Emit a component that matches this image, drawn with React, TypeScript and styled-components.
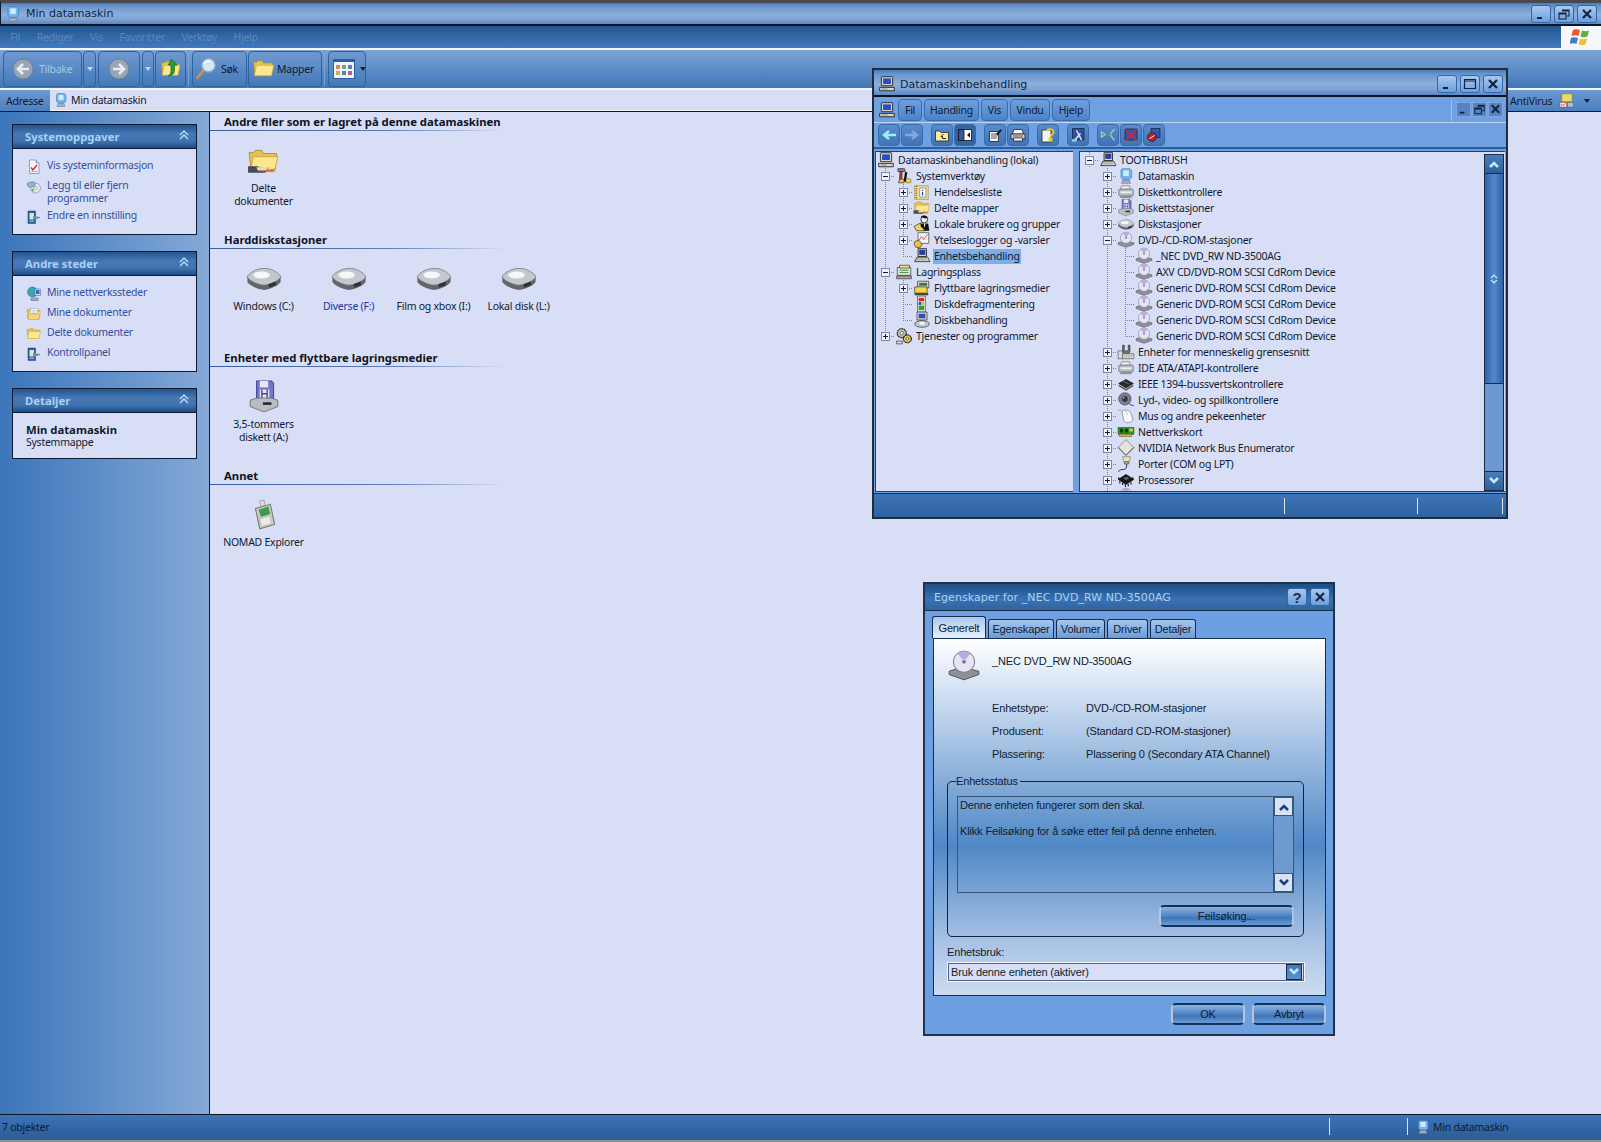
import React from 'react';
import styled, { createGlobalStyle, css } from 'styled-components';

const FONT = '"Noto Sans", "Liberation Sans", sans-serif';
const TITLE_FONT = '"DejaVu Sans", "Noto Sans", sans-serif';
const INK = '#101b30';

const GlobalStyle = createGlobalStyle`
  html, body { margin: 0; padding: 0; background: #d8def5; overflow: hidden; }
  body { font-family: ${FONT}; font-size: 10.5px; letter-spacing: -0.25px; color: ${INK}; }
  * { box-sizing: border-box; }
`;

const folder = (
  <>
    <path d="M2 7h4l2 -2h6l1 3h13l-2 17H4z" fill="#e8c24e" stroke="#a88a2c" strokeWidth=".8" />
    <path d="M6 11h23l-3 14H3z" fill="#fbe88e" stroke="#c8a23c" strokeWidth=".8" />
  </>
);
const hdd = (
  <>
    <path d="M2 15v4c0 2 8 7 14 7s14 -5 14 -7v-4z" fill="#62676e" />
    <path d="M2 15c0 -2 7 -7 13 -7h3c5 0 12 5 12 7s-8 7 -14 7S2 17 2 15z" fill="#c3c8ce" stroke="#6c7178" strokeWidth=".6" />
    <ellipse cx="14" cy="13.500" rx="7" ry="3" fill="#f6f7f9" />
    <path d="M20 21l6 -2v3l-6 2z" fill="#2f3338" />
  </>
);
const cd = (
  <>
    <path d="M2 21l12 -4 16 4v3l-14 5 -14 -5z" fill="#8d929a" stroke="#4a4f56" strokeWidth=".9" />
    <circle cx="16" cy="12" r="10" fill="#e4e4f2" stroke="#6e6e84" strokeWidth=".9" />
    <path d="M16 12L10 4a10 10 0 0 1 12 0z" fill="#b8aae2" />
    <circle cx="16" cy="12" r="2.200" fill="#7c7498" stroke="#fff" strokeWidth=".6" />
  </>
);
const monitor = (
  <>
    <rect x="6" y="3" width="20" height="16" rx="1" fill="#d9d6c8" stroke="#111" strokeWidth="1.400" />
    <rect x="9" y="6" width="14" height="10" fill="#2a4ec0" />
    <path d="M3 22h26v6H3z" fill="#d9d6c8" stroke="#111" strokeWidth="1.400" />
    <path d="M7 25h10" stroke="#555" />
  </>
);
const blueComputer = (
  <>
    <path d="M9 3h14l3 3v13l-4 3H11l-4 -3V6z" fill="#6fb6ee" stroke="#3670b0" />
    <path d="M11 6h10v10H11z" fill="#cfeaff" />
    <path d="M10 23h12l2 6H8z" fill="#a8acc0" stroke="#6a6e88" />
  </>
);
const drawer = (
  <>
    <path d="M8 5h14l2 6H6z" fill="#eef0f2" stroke="#555a62" />
    <rect x="3" y="11" width="26" height="12" rx="2" fill="#b8bcc2" stroke="#555a62" />
    <rect x="6" y="15" width="20" height="3" fill="#eceef0" />
    <path d="M6 23h20v4H6z" fill="#8d9198" />
  </>
);
const floppy = (
  <>
    <path d="M9 1h14l2 2v15H9z" fill="#7476c8" stroke="#44469a" />
    <path d="M12 1h8v6h-8z" fill="#e8e8f4" />
    <path d="M12 9h9v9h-9z" fill="#e8e8f4" />
    <path d="M14 9v9M19 9v9M14 13h5" stroke="#44469a" strokeWidth="1.300" />
    <path d="M3 19l6 -2h14l6 2v6l-13 5 -13 -5z" fill="#b9bcc2" stroke="#666a72" strokeWidth=".8" />
    <rect x="15" y="21" width="8" height="2.400" fill="#22252a" />
  </>
);
const chip = (
  <>
    <path d="M16 8l13 7 -13 8 -13 -8z" fill="#2c2c30" stroke="#000" />
    <path d="M3 17l13 8 13 -8v3l-13 8 -13 -8z" fill="#555" />
    <path d="M11 11l10 5" stroke="#999" />
  </>
);

const ICONS: Record<string, React.ReactNode> = {
  folder,
  hdd,
  cd,
  floppy,
  monitor,
  blueComputer,
  drawer,
  chip,
  shared: (
    <>
      {folder}
      <path d="M1 20h9l5 2 6 -1 -4 5H1z" fill="#4a4a52" />
      <path d="M9 21h6l6 -1 -3 4h-8z" fill="#f0d8b8" />
      <path d="M12 25l9 -2 6 -1 -3 3z" fill="#d86a2c" />
    </>
  ),
  docs: (
    <>
      {folder}
      <path d="M9 5h14v14H9z" fill="#fff" stroke="#8ba0bc" />
      <path d="M11 9h10M11 12h10M11 15h10" stroke="#7b93c0" />
      <path d="M4 16h24l-2 11H5z" fill="#f4d77a" stroke="#b8962e" />
    </>
  ),
  nomad: (
    <>
      <path d="M8 9l14 -4 4 19 -14 4z" fill="#c9ccc6" stroke="#74786e" />
      <path d="M11 10l9 -3 2 7 -9 3z" fill="#3d9a4c" />
      <path d="M13 19l8 -2 1 6 -8 2z" fill="#ecedea" />
      <path d="M12 2l4 -1 1 5 -4 1z" fill="#ddd" stroke="#888" strokeWidth=".6" />
    </>
  ),
  sysinfo: (
    <>
      <path d="M7 2h13l6 6v21H7z" fill="#f4f4fa" stroke="#4a5a82" />
      <path d="M20 2v6h6" fill="#d8dcec" stroke="#4a5a82" />
      <path d="M10 17l4 5 8 -10" fill="none" stroke="#d42030" strokeWidth="2.600" />
      <path d="M10 25h13" stroke="#c04060" />
    </>
  ),
  addRemove: (
    <>
      <circle cx="19" cy="18" r="10" fill="#dfe6ee" stroke="#68788a" />
      <circle cx="19" cy="18" r="3" fill="#fff" stroke="#68788a" />
      <path d="M3 8l10 -3 6 3 -2 7 -9 2 -5 -3z" fill="#8fb4c8" stroke="#507088" />
      <path d="M10 22l5 4v-7z" fill="#4aa84a" />
    </>
  ),
  control: (
    <>
      <path d="M4 4h15v25H4z" fill="#2f5f9f" stroke="#1e3a68" />
      <path d="M7 8h9v13H7z" fill="#d6e8c8" />
      <path d="M14 14l14 2v2l-14 4z" fill="#7a8aa8" />
      <path d="M7 23h9v3H7z" fill="#88a8d8" />
    </>
  ),
  network: (
    <>
      <circle cx="13" cy="12" r="10" fill="#3c9ed8" stroke="#20609a" />
      <path d="M6 8c4 -3 6 2 9 1s1 7 -3 7 -5 -4 -6 -8z" fill="#46b04a" />
      <path d="M18 6h11v13H18z" fill="#d8dcec" stroke="#4a5a82" />
      <path d="M20 8h7v8h-7z" fill="#2f6fd0" />
      <path d="M10 24h14v5H10z" fill="#a8acc4" stroke="#5a5e78" />
    </>
  ),
  up: (
    <>
      {folder}
      <path d="M17 2l8 8h-4v8c0 5 -4 8 -9 8 3 -2 4 -4 4 -8v-8h-4z" fill="#2aa42e" stroke="#0c5a14" />
    </>
  ),
  search: (
    <>
      <path d="M11 18L3 28" stroke="#c8944c" strokeWidth="3.400" strokeLinecap="round" />
      <circle cx="18" cy="11" r="9" fill="#cfe8f8" stroke="#8aa4bc" strokeWidth="1.800" />
      <path d="M12 9c2 -3 5 -4 8 -3" stroke="#fff" strokeWidth="2" fill="none" />
    </>
  ),
  tools: (
    <>
      <path d="M9 3l4 1 -1 20h-4z" fill="#c03a30" stroke="#111" />
      <path d="M5 3h12l1 5H5z" fill="#888" stroke="#111" />
      <path d="M18 8l4 2 -3 16h-4z" fill="#111" />
      <path d="M8 22l5 -1 3 2v5H6z" fill="#efc63c" stroke="#111" />
      <path d="M20 20l8 2v6h-8z" fill="#f0d860" stroke="#6a5a10" />
    </>
  ),
  eventlog: (
    <>
      <path d="M3 5h24v24H3z" fill="#f4e39a" stroke="#8a7424" />
      <path d="M6 5v24" stroke="#8a7424" strokeWidth="3" strokeDasharray="2 2" />
      <path d="M12 9h11v16H12z" fill="#fff" stroke="#555" />
      <path d="M17 12v2M17 16v6" stroke="#2040a0" strokeWidth="2.200" />
    </>
  ),
  users: (
    <>
      <circle cx="20" cy="8" r="6" fill="#f4f4f4" stroke="#111" strokeWidth="1.500" />
      <path d="M14 3c3 -3 10 -3 12 2l-5 1z" fill="#111" />
      <path d="M12 15h15l2 13H15z" fill="#111" />
      <path d="M19 15h3l-1 8z" fill="#fff" />
      <path d="M2 20l12 -6v6l8 8H6z" fill="#f2d35a" stroke="#111" />
    </>
  ),
  perf: (
    <>
      <path d="M9 3h19v19H9z" fill="#fff" stroke="#111" />
      <path d="M10 17l5 -7 4 5 7 -9" stroke="#c42828" fill="none" strokeWidth="1.400" />
      <path d="M13 3v19M18 3v19M23 3v19M9 9h19M9 15h19" stroke="#9aa" strokeWidth=".5" />
      <path d="M3 19l6 -3 4 3 3 5 -3 5H5l-3 -5z" fill="#e8c440" stroke="#111" />
    </>
  ),
  storage: (
    <>
      <path d="M4 8h24v14H4z" fill="#e6e4d8" stroke="#111" />
      <path d="M8 4h18v5H8z" fill="#f4e088" stroke="#111" />
      <path d="M8 13h16M8 17h16" stroke="#3a8a3a" strokeWidth="1.600" />
      <path d="M3 23h26v5H3z" fill="#aaa" stroke="#111" />
    </>
  ),
  removable: (
    <>
      <path d="M8 4h20v12H8z" fill="#d4d2c6" stroke="#111" />
      <path d="M11 7h14v5H11z" fill="#3a7a3a" />
      <path d="M3 14h22v11H3z" fill="#f0d848" stroke="#111" />
      <path d="M3 25h24v4H3z" fill="#444" />
    </>
  ),
  defrag: (
    <>
      <path d="M8 2h14v28H8z" fill="#f4f4f4" stroke="#222" />
      <path d="M10 5h10v6H10z" fill="#d02c2c" />
      <path d="M10 12h5v6h-5z" fill="#2c4cd0" />
      <path d="M15 12h5v6h-5z" fill="#e0c030" />
      <path d="M10 19h10v8H10z" fill="#2ca030" />
    </>
  ),
  diskmgmt: (
    <>
      <path d="M7 2h18v14H7z" fill="#d9d6c8" stroke="#111" />
      <path d="M10 5h12v8H10z" fill="#2a4ec0" />
      <ellipse cx="16" cy="23" rx="13" ry="6" fill="#c4c8ce" stroke="#111" />
      <ellipse cx="16" cy="22" rx="5" ry="2" fill="#fff" />
    </>
  ),
  services: (
    <>
      <circle cx="12" cy="11" r="8" fill="#c8c4b4" stroke="#111" strokeDasharray="3 1" strokeWidth="2" />
      <circle cx="12" cy="11" r="3" fill="#fff" stroke="#111" />
      <circle cx="22" cy="21" r="7" fill="#ecca4c" stroke="#111" strokeDasharray="3 1" strokeWidth="2" />
      <circle cx="22" cy="21" r="2.500" fill="#fff" stroke="#111" />
      <path d="M3 25h10v5H3z" fill="#ddd" stroke="#111" />
    </>
  ),
  laptop: (
    <>
      <path d="M9 3h15v14H9z" fill="#d9d6c8" stroke="#111" strokeWidth="1.400" />
      <path d="M11 5h11v9H11z" fill="#2a3e9c" />
      <path d="M7 18h19l4 8H3z" fill="#e8e6da" stroke="#111" strokeWidth="1.300" />
      <path d="M7 21h18M6 23h20" stroke="#333" strokeDasharray="1.500 1" />
    </>
  ),
  hid: (
    <>
      <path d="M2 14h8v14H2z" fill="#ddd" stroke="#333" />
      <path d="M10 4h3v8c0 3 7 3 7 0V4h3v10c0 4 -3 5 -6 5s-7 -1 -7 -5z" fill="#777" stroke="#111" />
      <path d="M10 19h20v9H10z" fill="#e6e6e0" stroke="#333" />
      <path d="M13 22h14M13 25h14" stroke="#555" strokeDasharray="2 1" />
    </>
  ),
  sound: (
    <>
      <circle cx="14" cy="14" r="11" fill="#7a8090" stroke="#333" />
      <circle cx="14" cy="14" r="5" fill="#30343c" />
      <circle cx="12" cy="12" r="1.500" fill="#ccc" />
      <path d="M22 22c2 3 5 4 8 4" stroke="#5a6ad8" strokeWidth="2" fill="none" />
    </>
  ),
  mouse: (
    <>
      <path d="M9 8c5 -5 14 -3 16 4l3 9c1 7 -14 10 -16 3z" fill="#fafafa" stroke="#70708a" strokeWidth="1.200" />
      <path d="M9 8c-3 -4 -6 -3 -7 -1" stroke="#70708a" fill="none" />
      <path d="M15 6l4 8" stroke="#9090a8" />
    </>
  ),
  netcard: (
    <>
      <path d="M2 8h28v12H2z" fill="#2f9a2f" stroke="#104a10" />
      <path d="M5 10h6v7H5zM14 10h6v7h-6z" fill="#0c3a0c" />
      <path d="M22 10h6v5h-6z" fill="#d6d23c" />
      <path d="M4 20h22v4H4z" fill="#d8b83c" stroke="#6a5a10" />
    </>
  ),
  nvidia: (
    <>
      <path d="M16 1l14 14 -14 14 -14 -14z" fill="#e4e4dc" stroke="#555" />
      <path d="M2 15l14 14 14 -14" fill="none" stroke="#777" strokeWidth="2" />
    </>
  ),
  port: (
    <>
      <path d="M10 3h14l-2 9h-10z" fill="#ece4a8" stroke="#666" />
      <path d="M13 12h8v4h-8z" fill="#aaa" stroke="#444" />
      <path d="M17 16v5c0 4 -4 5 -8 5s-6 2 -6 4" stroke="#222" strokeWidth="1.600" fill="none" />
    </>
  ),
  cpu: (
    <>
      <path d="M16 6l14 9 -14 9 -14 -9z" fill="#17171a" stroke="#000" />
      <path d="M5 18v4M10 21v4M15 24v4M20 23v4M25 20v4M3 11v4M28 11v4" stroke="#111" strokeWidth="2" />
      <path d="M11 13l6 -3 5 3 -6 3z" fill="#66666e" />
    </>
  ),
  antivirus: (
    <>
      <path d="M6 2h20v15H6z" fill="#f3d95c" stroke="#8c8a70" />
      <path d="M2 19h13v9H2z" fill="#f4f4f4" stroke="#b03030" />
      <path d="M4 23l4 2 5 -4" stroke="#c02a2a" fill="none" strokeWidth="1.600" />
      <path d="M17 19h12v9H17z" fill="#b8c0d0" stroke="#555" />
    </>
  ),
  upFolder: (
    <>
      <path d="M3 8h9l2 3h15v17H3z" fill="#f8ee9c" stroke="#111" strokeWidth="1.400" />
      <path d="M19 14l-5 5h3v4h7" fill="none" stroke="#111" strokeWidth="1.800" />
    </>
  ),
  splitPane: (
    <>
      <path d="M3 5h26v22H3z" fill="#fff" stroke="#111" strokeWidth="1.600" />
      <path d="M3 5h11v22H3z" fill="#345a90" stroke="#111" strokeWidth="1.600" />
      <path d="M26 11l-6 5 6 5z" fill="#111" />
    </>
  ),
  props: (
    <>
      <path d="M5 9h18v20H5z" fill="#f4f4f4" stroke="#111" strokeWidth="1.500" />
      <path d="M8 14h12M8 18h12M8 22h12" stroke="#111" strokeWidth="1.300" />
      <path d="M18 14l9 -10 3 3 -9 10z" fill="#222" />
    </>
  ),
  printer: (
    <>
      <path d="M8 5h16l3 9H5z" fill="#f8f8f8" stroke="#111" strokeWidth="1.400" />
      <path d="M2 14h28v10H2z" fill="#c8c8c8" stroke="#111" strokeWidth="1.400" />
      <path d="M7 22h18v6H7z" fill="#f8f8f8" stroke="#111" strokeWidth="1.400" />
      <path d="M6 18h20" stroke="#111" />
    </>
  ),
  helpDoc: (
    <>
      <path d="M4 6h18v24H4z" fill="#f4f4f4" stroke="#111" strokeWidth="1.400" />
      <path d="M13 9c2 -7 15 -6 14 2 -1 5 -6 4 -6 9M19 23h4v4h-4z" fill="none" stroke="#f0cc22" strokeWidth="3.600" />
    </>
  ),
  wrench: (
    <>
      <path d="M5 3h23v23H5z" fill="#2c4fa8" stroke="#111" strokeWidth="1.200" />
      <path d="M7 29l14 -16M13 7l10 19" stroke="#e8e8e8" strokeWidth="3" />
      <path d="M4 24h10v5H4z" fill="#88c8d8" />
    </>
  ),
  connect: (
    <>
      <path d="M3 10l8 5 -8 5zM29 4l-9 11 9 12" fill="none" stroke="#a8c8b8" strokeWidth="2.600" />
      <path d="M11 15h10" stroke="#5a9a5a" strokeWidth="3" />
    </>
  ),
  xMonitor: (
    <>
      <path d="M4 4h24v22H4z" fill="#3454b4" stroke="#111" strokeWidth="1.200" />
      <path d="M5 5l22 22M27 5L5 27" stroke="#d8262c" strokeWidth="3.400" />
    </>
  ),
  noMonitor: (
    <>
      <path d="M10 3h18v18H10z" fill="#3454b4" stroke="#111" strokeWidth="1.200" />
      <circle cx="12" cy="20" r="9" fill="#b0222c" stroke="#111" />
      <path d="M7 23l10 -6" stroke="#fff" strokeWidth="2" />
    </>
  ),
};

const Glyph = styled.svg<{ $size: number }>`
  flex: none;
  display: block;
  width: ${(p) => p.$size}px;
  height: ${(p) => p.$size}px;
`;

const Icon = ({ name, size = 16 }: { name: string; size?: number }) => (
  <Glyph $size={size} viewBox="0 0 32 32">
    {ICONS[name]}
  </Glyph>
);

/* main explorer window */

const Screen = styled.div`
  position: relative;
  display: flex;
  flex-direction: column;
  width: 1601px;
  height: 1142px;
  overflow: hidden;
  background: #d8def5;
`;

const titleGradient = css`
  background: linear-gradient(#4a7cb8 0%, #6c97cd 18%, #8cafdc 55%, #7fa3d3 78%, #5c87c0 100%);
`;

const TitleBar = styled.div`
  ${titleGradient};
  flex: none;
  display: flex;
  align-items: center;
  height: 26px;
  padding: 0 4px 0 3px;
  border-top: 3px solid #47494f;
  border-left: 1px solid #111a2b;
  border-bottom: 2px solid #0b1526;
`;

const WindowTitle = styled.span`
  flex: 1;
  margin-left: 4px;
  font-family: ${TITLE_FONT};
  font-size: 11px;
  letter-spacing: 0;
  color: #10233f;
`;

const CaptionButton = styled.span`
  flex: none;
  display: flex;
  align-items: center;
  justify-content: center;
  width: 20px;
  height: 18px;
  margin-left: 3px;
  border: 1px solid #2f66ac;
  border-radius: 3px;
  background: linear-gradient(#a8c8f0, #6e9fdc);
  color: #10243f;
`;

const CaptionSvg = styled.svg`
  display: block;
  width: 14px;
  height: 14px;
  fill: none;
  stroke: #10243f;
`;

const Minimize = () => (
  <CaptionSvg viewBox="0 0 14 14">
    <path d="M3 11h5" strokeWidth="2" />
  </CaptionSvg>
);
const Restore = () => (
  <CaptionSvg viewBox="0 0 14 14">
    <path d="M5 3h7v6h-2M2 6h7v6H2zM2 7h7M5 4h7" strokeWidth="1.100" />
  </CaptionSvg>
);
const Maximize = () => (
  <CaptionSvg viewBox="0 0 14 14">
    <path d="M1.500 2.500h11v9h-11zM1.500 4h11" strokeWidth="1.200" />
  </CaptionSvg>
);
const Close = () => (
  <CaptionSvg viewBox="0 0 14 14">
    <path d="M3 3l8 8M11 3l-8 8" strokeWidth="2.200" />
  </CaptionSvg>
);

const MenuBar = styled.div`
  flex: none;
  display: flex;
  align-items: center;
  justify-content: space-between;
  height: 24px;
  padding-left: 10px;
  background: linear-gradient(#24568f, #417ac0);
  border-bottom: 2px solid #f4f6fb;
`;

const MenuItems = styled.div`
  display: flex;
  gap: 16.500px;
`;

const MenuItem = styled.span`
  color: #5b87bb;
`;

const FlagBox = styled.div`
  display: flex;
  align-items: center;
  justify-content: center;
  width: 40px;
  height: 22px;
  background: #f6f7fa;
`;

const WinFlag = () => (
  <svg width="22" height="20" viewBox="0 0 22 20">
    <path d="M3 3c2 -1 4 -1 7 0l-1.500 6c-2 -1 -4 -1 -7 0z" fill="#e85a28" />
    <path d="M12 3.500c2 1 5 1 7 0l-1.500 6c-2 1 -5 1 -7 0z" fill="#5fb040" />
    <path d="M1 11c2 -1 4 -1 7 0l-1.500 6c-2 -1 -4 -1 -7 0z" fill="#3f7fd0" />
    <path d="M10 11.500c2 1 5 1 7 0l-1.500 6c-2 1 -5 1 -7 0z" fill="#f2c230" />
  </svg>
);

const Toolbar = styled.div`
  flex: none;
  display: flex;
  align-items: center;
  height: 40px;
  padding: 0 0 1px 3px;
  background: linear-gradient(#7ea5d6, #3f76b8);
  border-bottom: 2px solid #f4f6fb;
`;

const ToolButton = styled.div<{ $w: number; $gap?: number; $pad?: number; $inner?: number }>`
  flex: none;
  display: flex;
  align-items: center;
  gap: ${(p) => p.$inner ?? 5}px;
  width: ${(p) => p.$w}px;
  height: 36px;
  margin-right: ${(p) => p.$gap ?? 1}px;
  padding-left: ${(p) => p.$pad ?? 3}px;
  border: 1px solid #2e619f;
  border-radius: 4px;
  background: linear-gradient(#6f9ad0, #4479ba);
`;

const Caret = styled.span`
  width: 0;
  height: 0;
  margin: 0 auto;
  border: 3px solid transparent;
  border-top: 4px solid #0f1f38;
  border-bottom: 0;
`;

const GreyCaret = styled(Caret)`
  border-top-color: #c8d4e6;
`;

const ExtrasCaret = styled(Caret)`
  margin: 0;
`;

const BackDisc = styled.svg`
  flex: none;
  display: block;
  width: 22px;
  height: 22px;
`;

const Arrow = ({ flip }: { flip?: boolean }) => (
  <BackDisc viewBox="0 0 22 22">
    <circle cx="11" cy="11" r="10" fill="#9aa5b4" stroke="#6d7f98" />
    <path
      d={flip ? 'M5 11h10M11 6l5 5 -5 5' : 'M17 11H7M11 6l-5 5 5 5'}
      fill="none"
      stroke="#e8ecf2"
      strokeWidth="2.600"
    />
  </BackDisc>
);

const DimLabel = styled.span`
  color: #a9c6e6;
`;

const ViewsIcon = styled.div`
  display: grid;
  grid-template-columns: repeat(3, 4px);
  grid-auto-rows: 4px;
  gap: 2px;
  padding: 3px 2px;
  background: #eff3fb;
  border: 1px solid #2c5ea8;
  border-top-width: 3px;
`;

const ViewCell = styled.i<{ $c: string }>`
  background: ${(p) => p.$c};
`;

const ToolDivider = styled.span`
  width: 1px;
  height: 34px;
  margin: 0 3px 0 1px;
  background: #7ba3d4;
`;

const AddressBar = styled.div`
  flex: none;
  display: flex;
  align-items: stretch;
  height: 22px;
  background: linear-gradient(#6c99d0, #4b80c0);
  border-bottom: 1px solid #111b30;
`;

const AddressLabel = styled.span`
  display: flex;
  align-items: center;
  width: 50px;
  padding-left: 6px;
`;

const AddressField = styled.div`
  flex: 1;
  display: flex;
  align-items: center;
  gap: 2px;
  padding-left: 3px;
  background: #d8def5;
  border-bottom: 1px solid #f4f6fb;
`;

const AddressExtras = styled.div`
  flex: none;
  display: flex;
  align-items: center;
  width: 93px;
  padding-left: 2px;
`;

const ExtraIcon = styled.span`
  display: flex;
  margin-left: 7px;
  margin-right: 9px;
`;

const Body = styled.div`
  flex: 1;
  display: flex;
  min-height: 0;
`;

const Sidebar = styled.aside`
  flex: none;
  display: flex;
  flex-direction: column;
  gap: 16px;
  width: 210px;
  padding: 12px 12px 0;
  background: linear-gradient(90deg, #3b75ba, #85a9d8);
  border-right: 1px solid #111b30;
`;

const Panel = styled.section`
  width: 185px;
  background: #d8def5;
  border: 1px solid #0d1a33;
`;

const PanelHeader = styled.div`
  display: flex;
  align-items: center;
  justify-content: space-between;
  height: 24px;
  padding: 0 7px 0 12px;
  background: linear-gradient(#25548d, #4679b6 40%, #4073b0 70%, #1e4d86);
  border-bottom: 1px solid #0d1a33;
  font-size: 11.300px;
  font-weight: 700;
  letter-spacing: 0;
  color: #a8d0f4;
`;

const Chevrons = styled.svg`
  display: block;
  width: 10px;
  height: 10px;
  margin-top: -3px;
  fill: none;
  stroke: #b7dcf8;
  stroke-width: 1.400;
`;

const PanelBody = styled.div<{ $pad?: string }>`
  display: flex;
  flex-direction: column;
  gap: 4px;
  padding: ${(p) => p.$pad ?? '10px 8px 9px 13px'};
`;

const TaskLink = styled.div`
  display: flex;
  align-items: flex-start;
  gap: 5px;
  color: #31509e;
  line-height: 13px;
`;

const DetailName = styled.div`
  font-size: 11.300px;
  font-weight: 700;
  letter-spacing: 0;
  line-height: 13px;
`;

const DetailType = styled.div`
  line-height: 13px;
`;

const Content = styled.main`
  flex: 1;
  display: flex;
  flex-direction: column;
`;

const Section = styled.section`
  display: flex;
  flex-direction: column;
  height: 118px;
`;

const SectionTitle = styled.h2`
  flex: none;
  display: flex;
  align-items: center;
  width: 295px;
  height: 19px;
  margin: 0;
  padding-left: 14px;
  font-size: 11.300px;
  font-weight: 700;
  letter-spacing: 0;
  white-space: nowrap;
  color: #0c1424;
  border-bottom: 1px solid;
  border-image: linear-gradient(90deg, #3a5f9c 0%, #5b7cb6 60%, #d8def5 100%) 1;
`;

const Tiles = styled.div<{ $top: number }>`
  display: flex;
  padding: ${(p) => p.$top}px 0 0 11px;
`;

const Tile = styled.div<{ $blue?: boolean }>`
  display: flex;
  flex-direction: column;
  align-items: center;
  width: 85px;
  text-align: center;
  white-space: nowrap;
  line-height: 13px;
  color: ${(p) => (p.$blue ? '#22349c' : INK)};
`;

const TileIcon = styled.span<{ $space: number }>`
  display: flex;
  margin-bottom: ${(p) => p.$space}px;
`;

const StatusBar = styled.footer`
  flex: none;
  display: flex;
  align-items: center;
  height: 28px;
  padding: 0 0 2px 2px;
  background: linear-gradient(#3d74b7, #2f639f 70%, #2b5d97);
  border-top: 1px solid #0b1526;
  border-bottom: 2px solid #8a8f98;
`;

const StatusText = styled.span`
  flex: none;
  width: 1327px;
`;

const StatusDivider = styled.span<{ $before?: number; $after?: number }>`
  flex: none;
  width: 1px;
  height: 17px;
  margin-left: ${(p) => p.$before ?? 0}px;
  margin-right: ${(p) => p.$after ?? 0}px;
  background: #d9e6f6;
`;

const StatusName = styled.span`
  flex: none;
  display: flex;
  align-items: center;
  gap: 2px;
  width: 190px;
`;

/* computer management window */

const MmcWindow = styled.div`
  position: absolute;
  left: 872px;
  top: 68px;
  display: flex;
  flex-direction: column;
  width: 636px;
  height: 451px;
  background: #6ea0e2;
  border: 2px solid #232c3c;
`;

const MmcTitle = styled.div`
  ${titleGradient};
  flex: none;
  display: flex;
  align-items: center;
  height: 27px;
  padding: 3px 3px 0 4px;
  border-bottom: 2px solid #0b1526;
`;

const MmcMenu = styled.div`
  flex: none;
  display: flex;
  align-items: center;
  height: 26px;
  padding: 3px 3px 2px 4px;
  border-bottom: 1px solid #bcd4f0;
`;

const MmcMenuButton = styled.span<{ $w: number }>`
  display: flex;
  align-items: center;
  justify-content: center;
  width: ${(p) => p.$w}px;
  height: 22px;
  margin-left: 2px;
  border: 1px solid #376cb0;
  border-radius: 4px;
  background: linear-gradient(#70a0dc, #4d82c6);
`;

const MmcDocButtons = styled.div`
  display: flex;
  margin-left: auto;
  padding-left: 4px;
  gap: 1px;
  height: 21px;
  border-left: 1px solid #a5c2ea;
`;

const MmcDocButton = styled.span`
  display: flex;
  align-items: center;
  justify-content: center;
  width: 15px;
  height: 15px;
  margin-top: 2px;
  background: #5484c6;
  border: 1px solid #80a4d8;
`;

const MmcTools = styled.div`
  flex: none;
  display: flex;
  align-items: center;
  height: 26px;
  padding-left: 4px;
  border-bottom: 2px solid #2f5d98;
`;

const MmcTool = styled.span<{ $gap?: number; $dark?: boolean }>`
  flex: none;
  display: flex;
  align-items: center;
  justify-content: center;
  width: 22px;
  height: 22px;
  margin-right: ${(p) => p.$gap ?? 1}px;
  border: 1px solid #376cb0;
  border-radius: 4px;
  background: ${(p) => (p.$dark ? '#34639f' : 'linear-gradient(#5a8ccc, #3f74b6)')};
`;

const ToolArrow = styled.svg`
  display: block;
  width: 16px;
  height: 12px;
`;

const Panes = styled.div`
  flex: 1;
  display: flex;
  gap: 6px;
  min-height: 0;
  padding: 2px 1px 0 1px;
`;

const Pane = styled.div<{ $w: number }>`
  flex: ${(p) => (p.$w ? 'none' : '1')};
  ${(p) => (p.$w ? `width: ${p.$w}px;` : '')}
  display: flex;
  min-width: 0;
  overflow: hidden;
  background: #d8def5;
  border-left: 1px solid #24406c;
  border-top: 1px solid #24406c;
  border-bottom: 1px solid #24406c;
`;

const Tree = styled.div`
  flex: 1;
  display: flex;
  flex-direction: column;
  min-width: 0;
`;

const TreeRow = styled.div`
  flex: none;
  display: flex;
  align-items: center;
  height: 16px;
  white-space: nowrap;
`;

const dots = 'repeating-linear-gradient(#76849c 0 1px, transparent 1px 2px)';
const dotsH = 'repeating-linear-gradient(90deg, #76849c 0 1px, transparent 1px 2px)';

const GuideCell = styled.span<{ $kind: string }>`
  flex: none;
  display: flex;
  align-items: center;
  justify-content: center;
  width: 18px;
  height: 16px;
  background-repeat: no-repeat;
  ${({ $kind }) => {
    if ($kind === '|') return `background-image: ${dots}; background-size: 1px 16px; background-position: 9px 0;`;
    if ($kind === 't' || $kind === '+' || $kind === '-')
      return `background-image: ${dots}, ${dotsH}; background-size: 1px 16px, 9px 1px; background-position: 9px 0, 9px 8px;`;
    if ($kind === 'l' || $kind === 'p')
      return `background-image: ${dots}, ${dotsH}; background-size: 1px 8px, 9px 1px; background-position: 9px 0, 9px 8px;`;
    return '';
  }}
`;

const Expander = styled.span<{ $open: boolean }>`
  display: block;
  width: 9px;
  height: 9px;
  margin-left: 1px;
  border: 1px solid #7b88a0;
  background-color: #eef0fa;
  background-image: linear-gradient(#101b30, #101b30)
    ${(p) => (p.$open ? '' : ', linear-gradient(#101b30, #101b30)')};
  background-repeat: no-repeat;
  background-size: 5px 1px ${(p) => (p.$open ? '' : ', 1px 5px')};
  background-position: center ${(p) => (p.$open ? '' : ', center')};
`;

const RowIcon = styled.span`
  flex: none;
  display: flex;
  margin-left: 1px;
`;

const RowLabel = styled.span<{ $sel?: boolean }>`
  margin-left: 2px;
  padding: 0 1px;
  line-height: 15px;
  ${(p) => (p.$sel ? 'background: #7daeea;' : '')}
`;

type Row = [string, string, string, boolean?];

const LEFT_ROWS: Row[] = [
  ['', 'monitor', 'Datamaskinbehandling (lokal)'],
  ['-', 'tools', 'Systemverktøy'],
  ['|+', 'eventlog', 'Hendelsesliste'],
  ['|+', 'shared', 'Delte mapper'],
  ['|+', 'users', 'Lokale brukere og grupper'],
  ['|+', 'perf', 'Ytelseslogger og -varsler'],
  ['|l', 'laptop', 'Enhetsbehandling', true],
  ['-', 'storage', 'Lagringsplass'],
  ['|+', 'removable', 'Flyttbare lagringsmedier'],
  ['|t', 'defrag', 'Diskdefragmentering'],
  ['|l', 'diskmgmt', 'Diskbehandling'],
  ['p', 'services', 'Tjenester og programmer'],
];

const RIGHT_ROWS: Row[] = [
  ['-', 'laptop', 'TOOTHBRUSH'],
  [' +', 'blueComputer', 'Datamaskin'],
  [' +', 'drawer', 'Diskettkontrollere'],
  [' +', 'floppy', 'Diskettstasjoner'],
  [' +', 'hdd', 'Diskstasjoner'],
  [' -', 'cd', 'DVD-/CD-ROM-stasjoner'],
  [' |t', 'cd', '_NEC DVD_RW ND-3500AG'],
  [' |t', 'cd', 'AXV CD/DVD-ROM SCSI CdRom Device'],
  [' |t', 'cd', 'Generic DVD-ROM SCSI CdRom Device'],
  [' |t', 'cd', 'Generic DVD-ROM SCSI CdRom Device'],
  [' |t', 'cd', 'Generic DVD-ROM SCSI CdRom Device'],
  [' |l', 'cd', 'Generic DVD-ROM SCSI CdRom Device'],
  [' +', 'hid', 'Enheter for menneskelig grensesnitt'],
  [' +', 'drawer', 'IDE ATA/ATAPI-kontrollere'],
  [' +', 'chip', 'IEEE 1394-bussvertskontrollere'],
  [' +', 'sound', 'Lyd-, video- og spillkontrollere'],
  [' +', 'mouse', 'Mus og andre pekeenheter'],
  [' +', 'netcard', 'Nettverkskort'],
  [' +', 'nvidia', 'NVIDIA Network Bus Enumerator'],
  [' +', 'port', 'Porter (COM og LPT)'],
  [' +', 'cpu', 'Prosessorer'],
  [' t', 'cd', ''],
];

const TreeList = ({ rows }: { rows: Row[] }) => (
  <Tree>
    {rows.map(([guides, icon, label, selected], i) => (
      <TreeRow key={i}>
        {guides.split('').map((g, j) => (
          <GuideCell key={j} $kind={g}>
            {(g === '+' || g === '-' || g === 'p') && <Expander $open={g === '-'} />}
          </GuideCell>
        ))}
        <RowIcon>
          <Icon name={icon} size={18} />
        </RowIcon>
        <RowLabel $sel={selected}>{label}</RowLabel>
      </TreeRow>
    ))}
  </Tree>
);

const ScrollBar = styled.div`
  flex: none;
  display: flex;
  flex-direction: column;
  width: 20px;
  margin: 2px 1px 0 0;
  background: #6e99d0;
  border-left: 1px solid #1b2c4a;
  border-right: 1px solid #1b2c4a;
`;

const ScrollButton = styled.span`
  flex: none;
  display: flex;
  align-items: center;
  justify-content: center;
  height: 20px;
  margin: 0 -1px;
  background: linear-gradient(#4a7cba, #2f6098);
  border: 1px solid #1b2c4a;
`;

const ScrollThumb = styled.span`
  flex: none;
  display: flex;
  align-items: center;
  justify-content: center;
  height: 210px;
  background: linear-gradient(90deg, #2e63a3, #5289cc 50%, #2e63a3);
  border-bottom: 1px solid #1b2c4a;
`;

const ScrollSpace = styled.span`
  flex: 1;
`;

const Grip = styled.svg`
  display: block;
  width: 8px;
  height: 10px;
  fill: none;
  stroke: #cfe8fb;
  stroke-width: 1.200;
`;

const Chevron = styled.svg<{ $dark?: boolean }>`
  display: block;
  width: 12px;
  height: 8px;
  fill: none;
  stroke: ${(p) => (p.$dark ? '#1c4070' : '#bfeafc')};
  stroke-width: 2.500;
`;

const ChevUp = ({ dark }: { dark?: boolean }) => (
  <Chevron viewBox="0 0 12 8" $dark={dark}>
    <path d="M2 7l4 -4 4 4" />
  </Chevron>
);
const ChevDown = ({ dark }: { dark?: boolean }) => (
  <Chevron viewBox="0 0 12 8" $dark={dark}>
    <path d="M2 1l4 4 4 -4" />
  </Chevron>
);

const MmcStatus = styled.div`
  flex: none;
  display: flex;
  justify-content: flex-end;
  align-items: center;
  height: 24px;
  margin-top: 1px;
  padding-right: 3px;
  background: linear-gradient(#3d74b7, #2f639f);
  border-top: 1px solid #1b2c4a;
`;

const MmcStatusCell = styled.span<{ $w: number }>`
  width: ${(p) => p.$w}px;
  height: 16px;
  border-right: 1px solid #d9e6f6;
`;

/* properties dialog */

const Dialog = styled.div`
  position: absolute;
  left: 923px;
  top: 582px;
  display: flex;
  flex-direction: column;
  width: 412px;
  height: 454px;
  background: #6ca0e2;
  border: 2px solid #1e3350;
  font-family: "Liberation Sans", sans-serif;
  font-size: 11px;
  letter-spacing: -0.15px;
`;

const DialogTitle = styled.div`
  flex: none;
  display: flex;
  align-items: center;
  height: 27px;
  padding: 0 3px 0 9px;
  background: linear-gradient(#1c4e84, #3b72b2 60%, #2e639f);
  border-bottom: 1px solid #1b2c4a;
  font-family: ${TITLE_FONT};
  font-size: 11px;
  letter-spacing: 0.07px;
  color: #a9d2f6;
`;

const DialogTitleText = styled.span`
  flex: 1;
`;

const HelpMark = styled.span`
  font: 700 15px/1 "Liberation Sans", sans-serif;
  color: #1b2e4c;
`;

const Tabs = styled.div`
  flex: none;
  display: flex;
  align-items: flex-end;
  height: 27px;
  padding-left: 7px;
`;

const Tab = styled.span<{ $w: number; $active?: boolean }>`
  display: flex;
  align-items: center;
  justify-content: center;
  width: ${(p) => p.$w}px;
  height: ${(p) => (p.$active ? 22 : 19)}px;
  margin-right: 2px;
  border: 1px solid #1b2c4a;
  border-bottom: 0;
  border-radius: 3px 3px 0 0;
  background: ${(p) => (p.$active ? 'linear-gradient(#a8c8ee, #e8f0fb)' : 'linear-gradient(#a9c6ec, #6a9cd9)')};
`;

const TabPanel = styled.div`
  flex: none;
  display: flex;
  flex-direction: column;
  width: 393px;
  height: 358px;
  margin-left: 8px;
  padding: 10px 20px 0 13px;
  background: linear-gradient(#ffffff 0%, #c8daf0 18%, #4f88c6 58%, #a8c2e4 85%, #ccdcf0 100%);
  border: 1px solid #1b2c4a;
`;

const DeviceHead = styled.div`
  display: flex;
  gap: 11px;
  height: 44px;
`;

const DeviceName = styled.span`
  padding-top: 6px;
`;

const InfoGrid = styled.div`
  display: grid;
  grid-template-columns: 94px 1fr;
  grid-auto-rows: 23px;
  align-items: center;
  padding-left: 45px;
  margin-top: 3px;
`;

const GroupBox = styled.fieldset`
  display: flex;
  flex-direction: column;
  width: 357px;
  height: 162px;
  min-width: 0;
  margin: 10px 0 0;
  padding: 0 9px;
  border: 1px solid #10243f;
  border-radius: 5px;
`;

const GroupLegend = styled.legend`
  margin-left: -1px;
  padding: 0 2px 0 0;
  line-height: 12px;
`;

const StatusBox = styled.div`
  flex: none;
  display: flex;
  width: 337px;
  height: 97px;
  margin-top: 9px;
  border: 1px solid #3b5778;
`;

const StatusBoxText = styled.div`
  flex: 1;
  padding: 1px 2px;
  line-height: 14px;
`;

const StatusLine = styled.p`
  margin: 0 0 12px;
`;

const BoxScroll = styled.div`
  flex: none;
  display: flex;
  flex-direction: column;
  justify-content: space-between;
  width: 20px;
  background: #6f9ad0;
  border-left: 1px solid #3b5778;
`;

const BoxScrollButton = styled.span`
  display: flex;
  align-items: center;
  justify-content: center;
  height: 19px;
  background: #d8e2f5;
  border: 1px solid #3b5778;
`;

const GlassButton = styled.span<{ $w: number }>`
  flex: none;
  display: flex;
  align-items: center;
  justify-content: center;
  width: ${(p) => p.$w}px;
  height: 22px;
  border-style: solid;
  border-width: 2px;
  border-color: #12325c #b4c6dc #12325c #b4c6dc;
  border-radius: 5px;
  background: linear-gradient(#8db2e0, #4d84c6 50%, #3f76b8 60%, #6b9bd6);
`;

const TroubleRow = styled.div`
  display: flex;
  justify-content: flex-end;
  margin-top: 12px;
`;

const UsageLabel = styled.div`
  margin-top: 8px;
  line-height: 14px;
`;

const UsageSelect = styled.div`
  display: flex;
  align-items: center;
  justify-content: space-between;
  width: 358px;
  height: 20px;
  margin-top: 3px;
  padding: 0 1px 0 3px;
  background: #d8def5;
  border: 1px solid #f2f5fb;
  outline: 1px solid #52677f;
  outline-offset: -2px;
`;

const SelectArrow = styled.span`
  display: flex;
  align-items: center;
  justify-content: center;
  width: 16px;
  height: 16px;
  margin-right: 1px;
  background: linear-gradient(#4378b8, #5a90d0);
  border: 1px solid #14294a;
`;

const DialogActions = styled.div`
  display: flex;
  justify-content: flex-end;
  gap: 7px;
  padding: 7px 7px 0 0;
`;

const Chevs = () => (
  <Chevrons viewBox="0 0 10 10">
    <path d="M1 5l4 -4 4 4M1 9l4 -4 4 4" />
  </Chevrons>
);

const PANEL_ONE = [
  ['sysinfo', 'Vis systeminformasjon'],
  ['addRemove', 'Legg til eller fjern programmer'],
  ['control', 'Endre en innstilling'],
];
const PANEL_TWO = [
  ['network', 'Mine nettverkssteder'],
  ['docs', 'Mine dokumenter'],
  ['folder', 'Delte dokumenter'],
  ['control', 'Kontrollpanel'],
];

const DRIVES = [
  { label: 'Windows (C:)' },
  { label: 'Diverse (F:)', blue: true },
  { label: 'Film og xbox (I:)' },
  { label: 'Lokal disk (L:)' },
];

const VIEW_COLORS = ['#d88a5a', '#7aa86a', '#6a78c0', '#c8b050', '#5a8a9a', '#a86a88'];
const MENU = ['Fil', 'Rediger', 'Vis', 'Favoritter', 'Verktøy', 'Hjelp'];
const MMC_MENU: [string, number][] = [
  ['Fil', 24],
  ['Handling', 55],
  ['Vis', 27],
  ['Vindu', 40],
  ['Hjelp', 38],
];
const TABS: [string, number, boolean?][] = [
  ['Generelt', 54, true],
  ['Egenskaper', 66],
  ['Volumer', 49],
  ['Driver', 41],
  ['Detaljer', 46],
];

const MmcToolbar = () => (
  <MmcTools>
    <MmcTool>
      <ToolArrow viewBox="0 0 16 12">
        <path d="M15 6H5M8 2L3 6l5 4" fill="none" stroke="#9ff0f0" strokeWidth="2.400" />
      </ToolArrow>
    </MmcTool>
    <MmcTool $gap={8}>
      <ToolArrow viewBox="0 0 16 12">
        <path d="M1 6h10M8 2l5 4 -5 4" fill="none" stroke="#86a8d8" strokeWidth="2.400" />
      </ToolArrow>
    </MmcTool>
    <MmcTool>
      <Icon name="upFolder" />
    </MmcTool>
    <MmcTool $gap={8} $dark>
      <Icon name="splitPane" />
    </MmcTool>
    <MmcTool>
      <Icon name="props" />
    </MmcTool>
    <MmcTool $gap={8}>
      <Icon name="printer" />
    </MmcTool>
    <MmcTool $gap={8}>
      <Icon name="helpDoc" />
    </MmcTool>
    <MmcTool $gap={8}>
      <Icon name="wrench" />
    </MmcTool>
    <MmcTool>
      <Icon name="connect" />
    </MmcTool>
    <MmcTool>
      <Icon name="xMonitor" />
    </MmcTool>
    <MmcTool>
      <Icon name="noMonitor" />
    </MmcTool>
  </MmcTools>
);

const App = () => (
  <Screen>
    <GlobalStyle />
    <TitleBar>
      <Icon name="blueComputer" size={18} />
      <WindowTitle>Min datamaskin</WindowTitle>
      <CaptionButton>
        <Minimize />
      </CaptionButton>
      <CaptionButton>
        <Restore />
      </CaptionButton>
      <CaptionButton>
        <Close />
      </CaptionButton>
    </TitleBar>
    <MenuBar>
      <MenuItems>
        {MENU.map((m) => (
          <MenuItem key={m}>{m}</MenuItem>
        ))}
      </MenuItems>
      <FlagBox>
        <WinFlag />
      </FlagBox>
    </MenuBar>
    <Toolbar>
      <ToolButton $w={79} $pad={8}>
        <Arrow />
        <DimLabel>Tilbake</DimLabel>
      </ToolButton>
      <ToolButton $w={13} $gap={2} $pad={0}>
        <GreyCaret />
      </ToolButton>
      <ToolButton $w={42} $gap={2} $pad={9}>
        <Arrow flip />
      </ToolButton>
      <ToolButton $w={12} $gap={1} $pad={0}>
        <GreyCaret />
      </ToolButton>
      <ToolButton $w={31} $pad={4}>
        <Icon name="up" size={22} />
      </ToolButton>
      <ToolDivider />
      <ToolButton $w={55} $gap={1} $pad={2} $inner={2}>
        <Icon name="search" size={24} />
        <span>Søk</span>
      </ToolButton>
      <ToolButton $w={74} $inner={1}>
        <Icon name="folder" size={24} />
        <span>Mapper</span>
      </ToolButton>
      <ToolDivider />
      <ToolButton $w={38} $pad={4}>
        <ViewsIcon>
          {VIEW_COLORS.map((c) => (
            <ViewCell key={c} $c={c} />
          ))}
        </ViewsIcon>
        <Caret />
      </ToolButton>
    </Toolbar>
    <AddressBar>
      <AddressLabel>Adresse</AddressLabel>
      <AddressField>
        <Icon name="blueComputer" />
        <span>Min datamaskin</span>
      </AddressField>
      <AddressExtras>
        AntiVirus
        <ExtraIcon>
          <Icon name="antivirus" />
        </ExtraIcon>
        <ExtrasCaret />
      </AddressExtras>
    </AddressBar>
    <Body>
      <Sidebar>
        <Panel>
          <PanelHeader>
            Systemoppgaver
            <Chevs />
          </PanelHeader>
          <PanelBody>
            {PANEL_ONE.map(([icon, label]) => (
              <TaskLink key={label}>
                <Icon name={icon} />
                <span>{label}</span>
              </TaskLink>
            ))}
          </PanelBody>
        </Panel>
        <Panel>
          <PanelHeader>
            Andre steder
            <Chevs />
          </PanelHeader>
          <PanelBody>
            {PANEL_TWO.map(([icon, label]) => (
              <TaskLink key={label}>
                <Icon name={icon} />
                <span>{label}</span>
              </TaskLink>
            ))}
          </PanelBody>
        </Panel>
        <Panel>
          <PanelHeader>
            Detaljer
            <Chevs />
          </PanelHeader>
          <PanelBody $pad="10px 8px 9px 13px">
            <div>
              <DetailName>Min datamaskin</DetailName>
              <DetailType>Systemmappe</DetailType>
            </div>
          </PanelBody>
        </Panel>
      </Sidebar>
      <Content>
        <Section>
          <SectionTitle>Andre filer som er lagret på denne datamaskinen</SectionTitle>
          <Tiles $top={14}>
            <Tile>
              <TileIcon $space={3}>
                <Icon name="shared" size={34} />
              </TileIcon>
              Delte
              <br />
              dokumenter
            </Tile>
          </Tiles>
        </Section>
        <Section>
          <SectionTitle>Harddiskstasjoner</SectionTitle>
          <Tiles $top={10}>
            {DRIVES.map((d) => (
              <Tile key={d.label} $blue={d.blue}>
                <TileIcon $space={3}>
                  <Icon name="hdd" size={38} />
                </TileIcon>
                {d.label}
              </Tile>
            ))}
          </Tiles>
        </Section>
        <Section>
          <SectionTitle>Enheter med flyttbare lagringsmedier</SectionTitle>
          <Tiles $top={13}>
            <Tile>
              <TileIcon $space={4}>
                <Icon name="floppy" size={34} />
              </TileIcon>
              3,5-tommers
              <br />
              diskett (A:)
            </Tile>
          </Tiles>
        </Section>
        <Section>
          <SectionTitle>Annet</SectionTitle>
          <Tiles $top={14}>
            <Tile>
              <TileIcon $space={3}>
                <Icon name="nomad" size={34} />
              </TileIcon>
              NOMAD Explorer
            </Tile>
          </Tiles>
        </Section>
      </Content>
    </Body>
    <StatusBar>
      <StatusText>7 objekter</StatusText>
      <StatusDivider />
      <StatusDivider $before={77} $after={7} />
      <StatusName>
        <Icon name="blueComputer" />
        Min datamaskin
      </StatusName>
      <StatusDivider />
    </StatusBar>

    <MmcWindow>
      <MmcTitle>
        <Icon name="monitor" size={18} />
        <WindowTitle>Datamaskinbehandling</WindowTitle>
        <CaptionButton>
          <Minimize />
        </CaptionButton>
        <CaptionButton>
          <Maximize />
        </CaptionButton>
        <CaptionButton>
          <Close />
        </CaptionButton>
      </MmcTitle>
      <MmcMenu>
        <Icon name="monitor" size={18} />
        {MMC_MENU.map(([label, w]) => (
          <MmcMenuButton key={label} $w={w}>
            {label}
          </MmcMenuButton>
        ))}
        <MmcDocButtons>
          <MmcDocButton>
            <Minimize />
          </MmcDocButton>
          <MmcDocButton>
            <Restore />
          </MmcDocButton>
          <MmcDocButton>
            <Close />
          </MmcDocButton>
        </MmcDocButtons>
      </MmcMenu>
      <MmcToolbar />
      <Panes>
        <Pane $w={198}>
          <TreeList rows={LEFT_ROWS} />
        </Pane>
        <Pane $w={0}>
          <TreeList rows={RIGHT_ROWS} />
          <ScrollBar>
            <ScrollButton>
              <ChevUp />
            </ScrollButton>
            <ScrollThumb>
              <Grip viewBox="0 0 8 10">
                <path d="M1 4l3 -3 3 3M1 6l3 3 3 -3" />
              </Grip>
            </ScrollThumb>
            <ScrollSpace />
            <ScrollButton>
              <ChevDown />
            </ScrollButton>
          </ScrollBar>
        </Pane>
      </Panes>
      <MmcStatus>
        <MmcStatusCell $w={131} />
        <MmcStatusCell $w={133} />
        <MmcStatusCell $w={85} />
      </MmcStatus>
    </MmcWindow>

    <Dialog>
      <DialogTitle>
        <DialogTitleText>Egenskaper for _NEC DVD_RW ND-3500AG</DialogTitleText>
        <CaptionButton>
          <HelpMark>?</HelpMark>
        </CaptionButton>
        <CaptionButton>
          <Close />
        </CaptionButton>
      </DialogTitle>
      <Tabs>
        {TABS.map(([label, w, active]) => (
          <Tab key={label} $w={w} $active={active}>
            {label}
          </Tab>
        ))}
      </Tabs>
      <TabPanel>
        <DeviceHead>
          <Icon name="cd" size={34} />
          <DeviceName>_NEC DVD_RW ND-3500AG</DeviceName>
        </DeviceHead>
        <InfoGrid>
          <span>Enhetstype:</span>
          <span>DVD-/CD-ROM-stasjoner</span>
          <span>Produsent:</span>
          <span>(Standard CD-ROM-stasjoner)</span>
          <span>Plassering:</span>
          <span>Plassering 0 (Secondary ATA Channel)</span>
        </InfoGrid>
        <GroupBox>
          <GroupLegend>Enhetsstatus</GroupLegend>
          <StatusBox>
            <StatusBoxText>
              <StatusLine>Denne enheten fungerer som den skal.</StatusLine>
              <StatusLine>Klikk Feilsøking for å søke etter feil på denne enheten.</StatusLine>
            </StatusBoxText>
            <BoxScroll>
              <BoxScrollButton>
                <ChevUp dark />
              </BoxScrollButton>
              <BoxScrollButton>
                <ChevDown dark />
              </BoxScrollButton>
            </BoxScroll>
          </StatusBox>
          <TroubleRow>
            <GlassButton $w={135}>Feilsøking...</GlassButton>
          </TroubleRow>
        </GroupBox>
        <UsageLabel>Enhetsbruk:</UsageLabel>
        <UsageSelect>
          Bruk denne enheten (aktiver)
          <SelectArrow>
            <ChevDown />
          </SelectArrow>
        </UsageSelect>
      </TabPanel>
      <DialogActions>
        <GlassButton $w={74}>OK</GlassButton>
        <GlassButton $w={74}>Avbryt</GlassButton>
      </DialogActions>
    </Dialog>
  </Screen>
);

export default App;
